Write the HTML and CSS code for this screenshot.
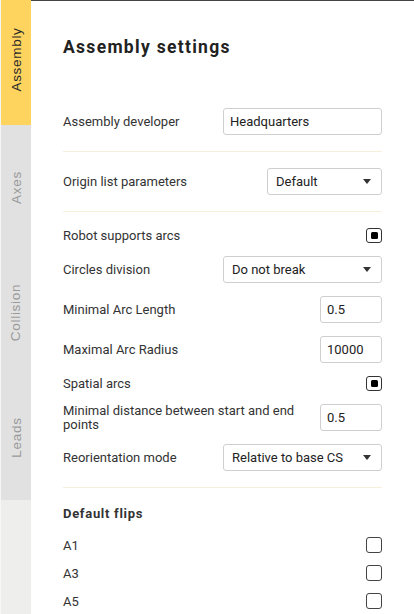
FILE: index.html
```html
<!DOCTYPE html>
<html>
<head>
<meta charset="utf-8">
<link rel="stylesheet" href="styles.css">
</head>
<body>
<div class="app">
  <nav class="sidebar">
    <div class="tab active"><span>Assembly</span></div>
    <div class="tab"><span>Axes</span></div>
    <div class="tab"><span>Collision</span></div>
    <div class="tab"><span>Leads</span></div>
  </nav>
  <main class="main">
    <h1 class="title">Assembly settings</h1>

    <section class="section">
      <div class="row">
        <span class="label">Assembly developer</span>
        <div class="field w-wide">Headquarters</div>
      </div>
    </section>

    <section class="section">
      <div class="row">
        <span class="label">Origin list parameters</span>
        <div class="select w-mid"><span>Default</span><i class="arrow"></i></div>
      </div>
    </section>

    <section class="section">
      <div class="rows">
        <div class="row row-cb">
          <span class="label">Robot supports arcs</span>
          <span class="cb checked"></span>
        </div>
        <div class="row">
          <span class="label">Circles division</span>
          <div class="select w-wide"><span>Do not break</span><i class="arrow"></i></div>
        </div>
        <div class="row">
          <span class="label">Minimal Arc Length</span>
          <div class="field w-small">0.5</div>
        </div>
        <div class="row">
          <span class="label">Maximal Arc Radius</span>
          <div class="field w-small">10000</div>
        </div>
        <div class="row row-cb">
          <span class="label">Spatial arcs</span>
          <span class="cb checked"></span>
        </div>
        <div class="row">
          <span class="label label-wrap">Minimal distance between start and end points</span>
          <div class="field w-small">0.5</div>
        </div>
        <div class="row">
          <span class="label">Reorientation mode</span>
          <div class="select w-wide"><span>Relative to base CS</span><i class="arrow"></i></div>
        </div>
      </div>
    </section>

    <section class="section flips">
      <h2 class="subtitle">Default flips</h2>
      <div class="rows flip-rows">
        <div class="row row-cb"><span class="label">A1</span><span class="cb"></span></div>
        <div class="row row-cb"><span class="label">A3</span><span class="cb"></span></div>
        <div class="row row-cb"><span class="label">A5</span><span class="cb"></span></div>
      </div>
    </section>
  </main>
</div>
</body>
</html>
```
FILE: styles.css
```css
html, body {
  margin: 0;
  padding: 0;
  background: #ffffff;
}
.app {
  display: flex;
  width: 414px;
  height: 614px;
  overflow: hidden;
  font-family: Roboto, "Liberation Sans", Arial, sans-serif;
  color: #333333;
}
.sidebar {
  width: 30px;
  flex: none;
  background: #eeeeec;
  border-left: 1px solid #f6f6f6;
  display: flex;
  flex-direction: column;
}
.tab {
  height: 125px;
  flex: none;
  background: #e1e1e1;
  display: flex;
  align-items: center;
  justify-content: center;
}
.tab span {
  transform: rotate(-90deg);
  white-space: nowrap;
  font-family: "Liberation Sans", Arial, sans-serif;
  font-size: 13.5px;
  letter-spacing: 0.7px;
  color: #9a9a9a;
}
.tab.active {
  background: #ffd45e;
}
.tab.active span {
  color: #2a2a2a;
  margin-bottom: 6px;
}
.main {
  flex: 1;
  border-top: 1px solid #454545;
  padding: 36px 32px 0 32px;
  min-width: 0;
}
.title {
  margin: 0 0 35px;
  font-size: 17.5px;
  line-height: 20px;
  font-weight: 700;
  letter-spacing: 1.3px;
  color: #222222;
}
.section {
  padding: 16px 0;
  border-bottom: 1px solid #f6efdc;
}
.rows {
  display: flex;
  flex-direction: column;
  gap: 13px;
}
.row {
  display: flex;
  align-items: center;
  justify-content: space-between;
  gap: 20px;
  min-height: 27px;
  font-size: 13px;
}
.row-cb {
  min-height: 15px;
}
.label {
  color: #333333;
  line-height: 15px;
}
.label-wrap {
  flex: 1;
  line-height: 13.5px;
}
.field, .select {
  box-sizing: border-box;
  height: 27px;
  border: 1px solid #cfcfcf;
  border-radius: 3px;
  display: flex;
  align-items: center;
  flex: none;
  font-size: 13px;
  color: #222222;
  background: #ffffff;
}
.field {
  padding: 0 6px;
}
.select {
  padding: 0 10px 0 8px;
  justify-content: space-between;
}
.w-wide { width: 159px; }
.w-mid { width: 115px; }
.w-small { width: 62px; }
.arrow {
  width: 0;
  height: 0;
  border-left: 4.5px solid transparent;
  border-right: 4.5px solid transparent;
  border-top: 5px solid #333333;
}
.cb {
  box-sizing: border-box;
  width: 16px;
  height: 15px;
  border: 1.5px solid #333333;
  border-radius: 3px;
  display: flex;
  align-items: center;
  justify-content: center;
  flex: none;
}
.cb.checked::after {
  content: "";
  width: 7px;
  height: 7px;
  background: #000000;
  border-radius: 1.5px;
}
.flips {
  border-bottom: none;
  padding-top: 18px;
}
.subtitle {
  margin: 0 0 15px;
  font-size: 13px;
  line-height: 16px;
  font-weight: 700;
  letter-spacing: 0.7px;
  color: #333333;
}
.flip-rows {
  gap: 12px;
}
.flip-rows .row-cb {
  min-height: 16px;
}
.flip-rows .cb {
  height: 16px;
  border-width: 1px;
  border-color: #444444;
}
```
